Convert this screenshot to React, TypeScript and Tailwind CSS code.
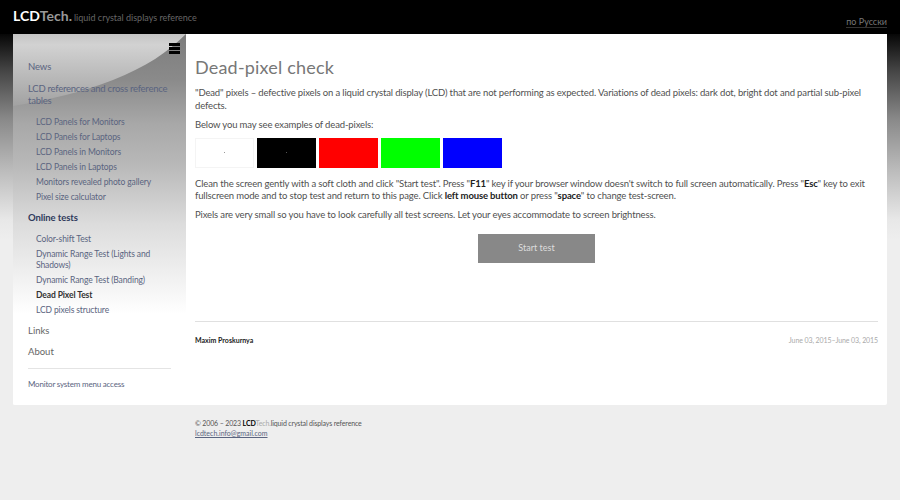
import React from "react";

function Sub({ children, active }: { children: React.ReactNode; active?: boolean }) {
  return (
    <li className={active ? "text-[8.5px] leading-[11px] font-bold tracking-[-0.1px] text-[#333]" : "text-[8.5px] leading-[11px] tracking-[-0.12px] text-[#5a6480]"}>{children}</li>
  );
}

export default function App() {
  return (
    <div className="relative h-[500px] w-[900px] overflow-hidden bg-[linear-gradient(to_bottom,#000_30px,#444444_70px,#8a8a8a_120px,#bbbbbb_170px,#e8e8e8_220px,#eeeeee_240px,#eeeeee_500px)] font-['Lato','Noto_Sans',sans-serif] text-[#505050]">
      <header className="flex h-[34px] items-end justify-between bg-black px-[13px]">
        <div className="flex items-baseline self-start pt-[8px]">
          <span className="text-[14px] font-bold leading-[16px] text-white">LCD</span>
          <span className="text-[14px] font-bold leading-[16px] text-[#999]">Tech.</span>
          <span className="ml-[2px] text-[9px] leading-[16px] text-[#666]">liquid crystal displays reference</span>
        </div>
        <span className="mb-[6px] border-b border-[#333] text-[9px] leading-[11px] text-[#777]">по Русски</span>
      </header>

      <main className="mx-[13px] flex h-[371px] overflow-hidden rounded-b-[2px] bg-white">
        <aside className="relative w-[173px] shrink-0 bg-[linear-gradient(to_bottom,#7c7c7c_0px,#8a8a8a_45px,#a8a8a8_90px,#b8b8b8_130px,#dcdcdc_190px,#ffffff_280px)] px-[15px]">
          <svg className="absolute left-0 top-0 h-[72px] w-[173px]" viewBox="0 0 173 72" preserveAspectRatio="none">
            <defs>
              <linearGradient id="curve" x1="0" y1="0" x2="0" y2="1">
                <stop offset="0" stopColor="#c4c4c4" />
                <stop offset="0.15" stopColor="#d2d2d2" />
                <stop offset="1" stopColor="#a2a2a2" />
              </linearGradient>
            </defs>
            <path d="M0 0H173C155 18 133 33 100 46C70 58 35 66 0 72Z" fill="url(#curve)" />
          </svg>
          <div className="absolute right-[6px] top-[9px] flex w-[11px] flex-col gap-[1.5px]">
            <span className="h-[2.5px] bg-black" />
            <span className="h-[2.5px] bg-black" />
            <span className="h-[2.5px] bg-black" />
          </div>
          <nav className="relative pt-[27px] text-[#5a6480]">
            <p className="text-[9.5px] leading-[12px] tracking-[-0.1px]">News</p>
            <p className="mt-[10px] text-[9.5px] leading-[12px] tracking-[-0.25px]">LCD references and cross reference tables</p>
            <ul className="mt-[10px] flex flex-col gap-[4px] pl-[8px]">
              <Sub>LCD Panels for Monitors</Sub>
              <Sub>LCD Panels for Laptops</Sub>
              <Sub>LCD Panels in Monitors</Sub>
              <Sub>LCD Panels in Laptops</Sub>
              <Sub>Monitors revealed photo gallery</Sub>
              <Sub>Pixel size calculator</Sub>
            </ul>
            <p className="mt-[9px] text-[9.5px] font-bold leading-[12px] tracking-[-0.1px] text-[#2f3a5c]">Online tests</p>
            <ul className="mt-[10px] flex flex-col gap-[4px] pl-[8px]">
              <Sub>Color-shift Test</Sub>
              <Sub>Dynamic Range Test (Lights and Shadows)</Sub>
              <Sub>Dynamic Range Test (Banding)</Sub>
              <Sub active>Dead Pixel Test</Sub>
              <Sub>LCD pixels structure</Sub>
            </ul>
            <p className="mt-[9px] text-[9.5px] leading-[12px] text-[#666]">Links</p>
            <p className="mt-[9px] text-[9.5px] leading-[12px] text-[#666]">About</p>
            <div className="mt-[10px] h-px bg-[#e4e4e4]" />
            <p className="mt-[10px] text-[8px] leading-[11px] tracking-[-0.2px] text-[#5a6480]">Monitor system menu access</p>
          </nav>
        </aside>

        <section className="flex flex-1 flex-col px-[9px] text-[9.5px] leading-[12.5px] tracking-[-0.14px]">
          <h1 className="mt-[21px] text-[18px] font-normal leading-[24px] tracking-[0.2px] text-[#777]">Dead-pixel check</h1>
          <p className="mt-[8px]">
            "Dead" pixels – defective pixels on a liquid crystal display (LCD) that are not performing as expected. Variations of dead pixels: dark dot, bright dot and partial sub-pixel defects.
          </p>
          <p className="mt-[7px]">Below you may see examples of dead-pixels:</p>
          <div className="mt-[6px] flex gap-[3px]">
            <div className="flex h-[30px] w-[59px] items-center justify-center border border-[#f4f4f4] bg-white"><span className="h-px w-px bg-[#999]" /></div>
            <div className="flex h-[30px] w-[59px] items-center justify-center bg-black"><span className="h-px w-px bg-[#555]" /></div>
            <div className="h-[30px] w-[59px] bg-[#ff0000]" />
            <div className="h-[30px] w-[59px] bg-[#00ff00]" />
            <div className="h-[30px] w-[59px] bg-[#0000ff]" />
          </div>
          <p className="mt-[10px]">
            Clean the screen gently with a soft cloth and click "Start test". Press "<b className="text-[#222]">F11</b>" key if your browser window doesn't switch to full screen automatically. Press "<b className="text-[#222]">Esc</b>" key to exit fullscreen mode and to stop test and return to this page. Click <b className="text-[#222]">left mouse button</b> or press "<b className="text-[#222]">space</b>" to change test-screen.
          </p>
          <p className="mt-[6px]">Pixels are very small so you have to look carefully all test screens. Let your eyes accommodate to screen brightness.</p>
          <button className="mx-auto mt-[13px] h-[29px] w-[117px] bg-[#888] text-[9px] tracking-normal text-[#ddd]">Start test</button>
          <div className="mt-[58px] h-px bg-[#e0e0e0]" />
          <div className="mt-[13px] flex items-center justify-between leading-[10px] tracking-normal">
            <span className="text-[7px] font-bold text-[#222]">Maxim Proskurnya</span>
            <span className="text-[7px] tracking-[-0.1px] text-[#aaa]">June 03, 2015–June 03, 2015</span>
          </div>
        </section>
      </main>

      <footer className="pl-[195px] pt-[13px] text-[7px] leading-[10px] text-[#555]">
        <p className="tracking-[-0.14px]">© 2006 – 2023 <b className="text-black">LCD</b><span className="text-[#aaa]">Tech.</span>liquid crystal displays reference</p>
        <a className="text-[#5a6480] underline">lcdtech.info@gmail.com</a>
      </footer>
    </div>
  );
}
